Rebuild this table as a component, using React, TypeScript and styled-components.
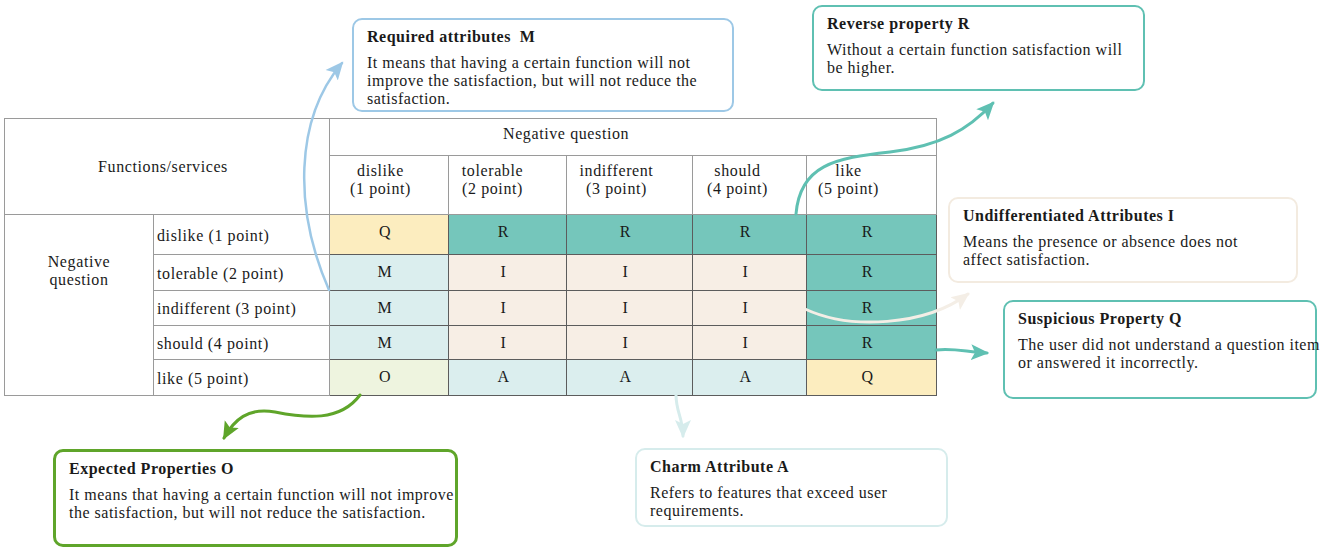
// KANO 평가표 + 속성 설명 다이어그램
import styled, { createGlobalStyle } from "styled-components";
import { Fragment } from "react";

const GlobalStyle = createGlobalStyle`
    html, body {
        margin : 0;
        padding : 0;
        background : #ffffff;
    }
    body {
        font-family : "Liberation Serif", "DejaVu Serif", serif;
        color : #1a1a1a;
    }
`;

// 전체 캔버스 (다이어그램 영역)
const Canvas = styled.div`
    position : relative;
    width : 1325px;
    height : 553px;
    overflow : hidden;
`;

// 평가표 grid
const Matrix = styled.div`
    display : grid;
    grid-template-columns : 149px 176px 119px 118px 126px 114px 130px;
    grid-template-rows : 37px 59px 40px 36px 35px 34px 36px;
    width : 933px;
    margin : 118px 0 0 4px;
    border-top : 1px solid #9a9a9a;
    border-left : 1px solid #9a9a9a;
    box-sizing : border-box;
    font-size : 16px;
    letter-spacing : 0.6px;
`;

const Cell = styled.div`
    box-sizing : border-box;
    border-right : 1px solid #9a9a9a;
    border-bottom : 1px solid #9a9a9a;
    line-height : 18px;
`;

// 좌상단 Functions/services
const CornerCell = styled(Cell)`
    grid-column : 1 / 3;
    grid-row : 1 / 3;
    display : flex;
    align-items : center;
    justify-content : center;
    padding-right : 8px;
`;

// 상단 Negative question
const TopHead = styled(Cell)`
    grid-column : 3 / 8;
    padding : 6px 0 0 173px;
`;

// 컬럼 헤더 (dislike ~ like)
const ColHead = styled(Cell)<{ $shift: number }>`
    text-align : center;
    padding : 6px ${(p) => p.$shift}px 0 0;
`;

// 좌측 Negative question 묶음
const GroupCell = styled(Cell)`
    grid-column : 1 / 2;
    grid-row : 3 / 8;
    text-align : center;
    padding-top : 38px;
`;

// 행 라벨
const RowLabel = styled(Cell)`
    display : flex;
    align-items : center;
    padding : 2px 0 0 3px;
    white-space : nowrap;
`;

const tones: Record<string, string> = {
    Q: "#fcedbf",
    R: "#75c6bb",
    M: "#dbeeee",
    A: "#dbeeee",
    I: "#f7eee5",
    O: "#eef4df",
};

// 결과 셀
const DataCell = styled(Cell)<{ $tone: string }>`
    background : ${(p) => tones[p.$tone]};
    border-right-color : #5c5c5c;
    border-bottom-color : #5c5c5c;
    display : flex;
    justify-content : center;
    padding-top : 8px;
    padding-right : 8px;
`;

// 설명 박스 (다이어그램 노드)
const Callout = styled.div<{ $x: number; $y: number; $w: number; $h: number; $line: string; $bw?: number }>`
    position : absolute;
    left : ${(p) => p.$x}px;
    top : ${(p) => p.$y}px;
    width : ${(p) => p.$w}px;
    height : ${(p) => p.$h}px;
    box-sizing : border-box;
    border : ${(p) => p.$bw ?? 2.5}px solid ${(p) => p.$line};
    border-radius : 10px;
    background : #ffffff;
    padding : 8px 0 0 13px;
    font-size : 16px;
    letter-spacing : 0.5px;
    line-height : 18px;
    white-space : nowrap;
`;

const CalloutTitle = styled.div`
    font-weight : bold;
    white-space : pre;
    margin-bottom : 8px;
`;

const CalloutText = styled.div``;

const Arrows = styled.svg`
    position : absolute;
    left : 0;
    top : 0;
    pointer-events : none;
`;

const columns = [
    { top: "dislike", sub: "(1 point)", shift: 17 },
    { top: "tolerable", sub: "(2 point)", shift: 30 },
    { top: "indifferent", sub: "(3 point)", shift: 26 },
    { top: "should", sub: "(4 point)", shift: 24 },
    { top: "like", sub: "(5 point)", shift: 46 },
];

const rows = [
    { label: "dislike (1 point)", cells: ["Q", "R", "R", "R", "R"] },
    { label: "tolerable (2 point)", cells: ["M", "I", "I", "I", "R"] },
    { label: "indifferent (3 point)", cells: ["M", "I", "I", "I", "R"] },
    { label: "should (4 point)", cells: ["M", "I", "I", "I", "R"] },
    { label: "like (5 point)", cells: ["O", "A", "A", "A", "Q"] },
];

const callouts = [
    {
        x: 352, y: 18, w: 382, h: 94, line: "#9dc8e6",
        title: "Required attributes  M",
        text: ["It means that having a certain function will not", "improve the satisfaction, but will not reduce the", "satisfaction."],
    },
    {
        x: 812, y: 5, w: 333, h: 86, line: "#5fc0b2",
        title: "Reverse property R",
        text: ["Without a certain function satisfaction will", "be higher."],
    },
    {
        x: 948, y: 197, w: 350, h: 86, line: "#f3ebe0",
        title: "Undifferentiated Attributes I",
        text: ["Means the presence or absence does not", "affect satisfaction."],
    },
    {
        x: 1003, y: 300, w: 314, h: 99, line: "#5fc0b2",
        title: "Suspicious Property Q",
        text: ["The user did not understand a question item", "or answered it incorrectly."],
    },
    {
        x: 53, y: 449, w: 405, h: 98, line: "#5fa52a", bw: 3,
        title: "Expected Properties O",
        text: ["It means that having a certain function will not improve", "the satisfaction, but will not reduce the satisfaction."],
    },
    {
        x: 635, y: 448, w: 313, h: 79, line: "#d6ecec",
        title: "Charm Attribute A",
        text: ["Refers to features that exceed user", "requirements."],
    },
];

// 화살표 정의 (색상, 경로)
const arrows = [
    { id: "blue", color: "#9dc8e6", w: 2.5, d: "M329,290 C294,210 294,120 342,63" },
    { id: "tealR", color: "#5fc0b2", w: 3, d: "M796,214 C800,165 835,158 890,152 C940,146 968,130 993,103" },
    { id: "beige", color: "#f4eee6", w: 3, d: "M805,309 C850,330 925,326 968,294" },
    { id: "tealQ", color: "#5fc0b2", w: 3, d: "M936,350 C955,348 966,352 987,353" },
    { id: "green", color: "#5fa52a", w: 3, d: "M360,395 C340,422 305,418 275,412 C248,407 234,420 224,438" },
    { id: "light", color: "#d6ecec", w: 3, d: "M676,395 C676,412 683,418 683,436" },
];

export default function App() {
    return (
        <Canvas>
            <GlobalStyle />
            <Matrix>
                <CornerCell>Functions/services</CornerCell>
                <TopHead>Negative question</TopHead>
                {columns.map((c) => (
                    <ColHead key={c.top} $shift={c.shift}>
                        {c.top}
                        <br />
                        {c.sub}
                    </ColHead>
                ))}
                <GroupCell>
                    Negative
                    <br />
                    question
                </GroupCell>
                {rows.map((r) => (
                    <Fragment key={r.label}>
                        <RowLabel>{r.label}</RowLabel>
                        {r.cells.map((v, i) => (
                            <DataCell key={i} $tone={v}>
                                {v}
                            </DataCell>
                        ))}
                    </Fragment>
                ))}
            </Matrix>

            {callouts.map((c) => (
                <Callout key={c.title} $x={c.x} $y={c.y} $w={c.w} $h={c.h} $line={c.line} $bw={c.bw}>
                    <CalloutTitle>{c.title}</CalloutTitle>
                    {c.text.map((t) => (
                        <CalloutText key={t}>{t}</CalloutText>
                    ))}
                </Callout>
            ))}

            <Arrows width={1325} height={553} viewBox="0 0 1325 553">
                <defs>
                    {arrows.map((a) => (
                        <marker
                            key={a.id}
                            id={"head-" + a.id}
                            markerUnits="userSpaceOnUse"
                            markerWidth={20}
                            markerHeight={18}
                            refX={16}
                            refY={9}
                            orient="auto"
                        >
                            <path d="M0,1 L18,9 L0,17 L4,9 Z" fill={a.color} />
                        </marker>
                    ))}
                </defs>
                {arrows.map((a) => (
                    <path
                        key={a.id}
                        d={a.d}
                        fill="none"
                        stroke={a.color}
                        strokeWidth={a.w}
                        strokeLinecap="round"
                        markerEnd={`url(#head-${a.id})`}
                    />
                ))}
            </Arrows>
        </Canvas>
    );
}
